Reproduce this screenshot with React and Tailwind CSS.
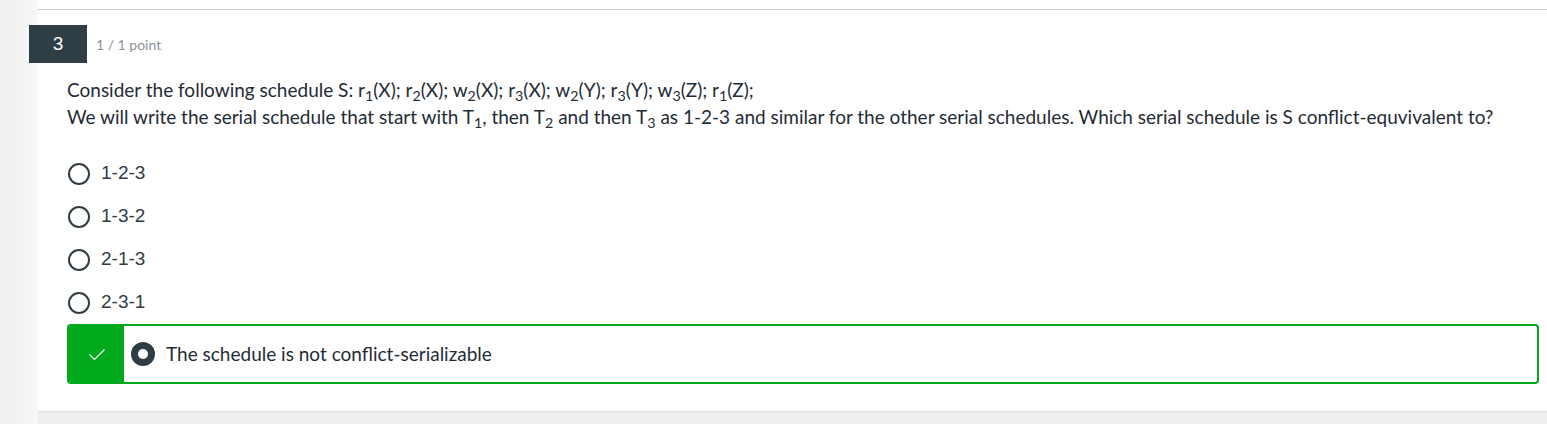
import React from "react";

const lato = { fontFamily: "Lato, 'Open Sans', sans-serif" };

function Radio() {
  return <span className="inline-block w-[22px] h-[22px] rounded-full border-[2.5px] border-[#2f3d45] shrink-0" />;
}

function Option({ label }) {
  return (
    <div className="flex items-center h-[43px] pl-[68px]">
      <Radio />
      <span className="ml-[11px] text-[19px] text-[#2f3d45] font-['Liberation_Sans',Arial,sans-serif]">{label}</span>
    </div>
  );
}

export default function App() {
  return (
    <div className="w-[1547px] h-[424px] bg-[#eeeeee] flex overflow-hidden">
      <div className="w-[38px] h-full bg-gradient-to-r from-[#efefef] to-[#f7f7f7] shrink-0" />
      <div className="flex-1 flex flex-col">
        <div className="bg-white h-[412px] border-b border-[#d6dde3] flex flex-col">
          <div className="h-[10px] border-b border-[#cccccc]" />
          <div className="flex items-center mt-[15px]">
            <div className="-ml-[9px] w-[58px] h-[38px] bg-[#2f3d45] text-white flex items-center justify-center text-[19px] font-['Liberation_Sans',Arial,sans-serif]">3</div>
            <span className="ml-[9px] text-[14px] text-[#8a9299]" style={lato}>1 / 1 point</span>
          </div>
          <div className="pl-[29px] mt-[13px] text-[19px] leading-[27px] text-[#1f2c36]" style={lato}>
            <div>Consider the following schedule S: r<sub>1</sub>(X); r<sub>2</sub>(X); w<sub>2</sub>(X); r<sub>3</sub>(X); w<sub>2</sub>(Y); r<sub>3</sub>(Y); w<sub>3</sub>(Z); r<sub>1</sub>(Z);</div>
            <div>We will write the serial schedule that start with T<sub>1</sub>, then T<sub>2</sub> and then T<sub>3</sub> as 1-2-3 and similar for the other serial schedules. Which serial schedule is S conflict-equvivalent to?</div>
          </div>
          <div className="mt-[22px] -ml-[38px]">
            <Option label="1-2-3" />
            <Option label="1-3-2" />
            <Option label="2-1-3" />
            <Option label="2-3-1" />
          </div>
          <div className="ml-[29px] mr-[8px] h-[60px] border-2 border-[#00a81c] rounded-[4px] flex items-stretch overflow-hidden">
            <div className="w-[55px] bg-[#00a81c] flex items-center justify-center">
              <svg width="18" height="13" viewBox="0 0 18 13" fill="none">
                <path d="M1.5 6.5 L6.5 11.5 L16.5 1.5" stroke="white" strokeWidth="1.1" />
              </svg>
            </div>
            <div className="flex items-center pl-[7px]">
              <span className="w-[24px] h-[24px] rounded-full bg-[#2f3d45] flex items-center justify-center shrink-0">
                <span className="w-[10px] h-[10px] rounded-full bg-white" />
              </span>
              <span className="ml-[11px] text-[19px] text-[#1f2c36]" style={lato}>The schedule is not conflict-serializable</span>
            </div>
          </div>
        </div>
      </div>
    </div>
  );
}
